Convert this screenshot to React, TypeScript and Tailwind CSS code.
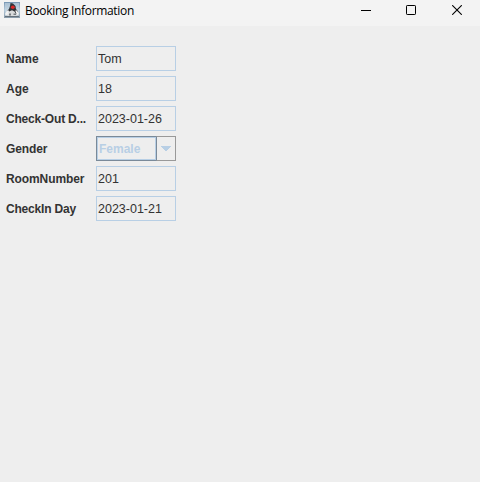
import React from "react";

type Row = { label: string; value: string; kind?: "select"; labelClass: string };

const rows: Row[] = [
  { label: "Name", value: "Tom", labelClass: "tracking-normal" },
  { label: "Age", value: "18", labelClass: "tracking-normal" },
  { label: "Check-Out D...", value: "2023-01-26", labelClass: "tracking-[-0.19px]" },
  { label: "Gender", value: "Female", kind: "select", labelClass: "tracking-[-0.1px]" },
  { label: "RoomNumber", value: "201", labelClass: "tracking-[-0.1px]" },
  { label: "CheckIn Day", value: "2023-01-21", labelClass: "tracking-[-0.19px]" },
];

function AppIcon() {
  return (
    <svg width="16" height="16" viewBox="0 0 16 16" className="block">
      <defs>
        <linearGradient id="sky" x1="0" y1="0" x2="0" y2="1">
          <stop offset="0" stopColor="#7796b3" />
          <stop offset="0.5" stopColor="#b5cadb" />
          <stop offset="1" stopColor="#8799a8" />
        </linearGradient>
      </defs>
      <rect width="16" height="16" fill="url(#sky)" />
      <rect x="1" y="1" width="14" height="13" fill="#cddce8" opacity="0.55" />
      <path d="M6.5 1 L9 1.5 L11.5 4 L12 7 L14 9.5 L13.5 12 L3 12 L3 9 L5 7 L6 4 Z" fill="#303438" />
      <path d="M5 9.5 L8 8.3 L10.5 9.5 L12 12 L13 14 L3 14 L4 12 Z" fill="#d9dbdc" />
      <path d="M1 12 L3 8.5 L5 8.5 L4.8 12 L2 13.5 Z M11.2 8.5 L13 8.5 L15 12 L13 13.5 Z" fill="#f2f2f2" />
      <path d="M5 11.5H7V13.5H5Z M9.5 11.5H12V13H9.5Z" fill="#777c80" />
      <ellipse cx="8.8" cy="5.3" rx="1.9" ry="1.7" fill="#dc2626" />
      <rect x="1" y="14" width="14" height="1" fill="#64717c" />
    </svg>
  );
}

function TitleBar() {
  return (
    <header className="flex h-[26px] items-start bg-[#f3f3f3] pl-1 text-black">
      <div className="pt-0.5">
        <AppIcon />
      </div>
      <h1 className="ml-[5px] mt-[3px] whitespace-nowrap font-['Open_Sans',sans-serif] text-[12px] font-normal leading-4 tracking-[-0.32px]">
        Booking Information
      </h1>
      <div className="ml-auto flex h-5 items-center pr-[18px]">
        <svg width="10" height="10" shapeRendering="crispEdges" className="mr-[35px]">
          <path d="M0 5.5H10" stroke="#000" />
        </svg>
        <svg width="10" height="10" className="mr-9">
          <rect x="0.5" y="0.5" width="9" height="9" rx="0.7" fill="none" stroke="#000" />
        </svg>
        <svg width="10" height="10">
          <path d="M0.2 0.2L9.8 9.8M9.8 0.2L0.2 9.8" stroke="#000" strokeWidth="1.1" />
        </svg>
      </div>
    </header>
  );
}

function GenderSelect({ value }: { value: string }) {
  return (
    <div className="flex h-[25px] w-20">
      <div className="w-[60px] border border-r-0 border-[#7a8a99]">
        <div className="h-full border border-[#b8cfe5] pl-px text-[12px] font-bold leading-[22px] text-[#b8cfe5]">
          {value}
        </div>
      </div>
      <div className="flex w-5 items-center justify-center border border-[#999999] border-l-[#7a8a99]">
        <svg width="10" height="5" shapeRendering="crispEdges">
          <path d="M0 0H10V1H9V2H8V3H7V4H6V5H4V4H3V3H2V2H1V1H0Z" fill="#b8cfe5" />
        </svg>
      </div>
    </div>
  );
}

export default function App() {
  return (
    <div className="h-[482px] w-[480px] overflow-hidden bg-[#eeeeee] font-['Liberation_Sans',Arial,sans-serif]">
      <TitleBar />
      <main className="flex flex-col gap-[5px] pl-1.5 pt-5">
        {rows.map((row) => (
          <div key={row.label} className="flex h-[25px]">
            <span
              className={`w-[90px] whitespace-nowrap text-[12px] font-bold leading-[27px] text-[#333333] ${row.labelClass}`}
            >
              {row.label}
            </span>
            {row.kind === "select" ? (
              <GenderSelect value={row.value} />
            ) : (
              <div className="h-[25px] w-20 border border-[#b8cfe5] pl-px text-[12.5px] leading-[25px] text-[#333333]">
                {row.value}
              </div>
            )}
          </div>
        ))}
      </main>
    </div>
  );
}
